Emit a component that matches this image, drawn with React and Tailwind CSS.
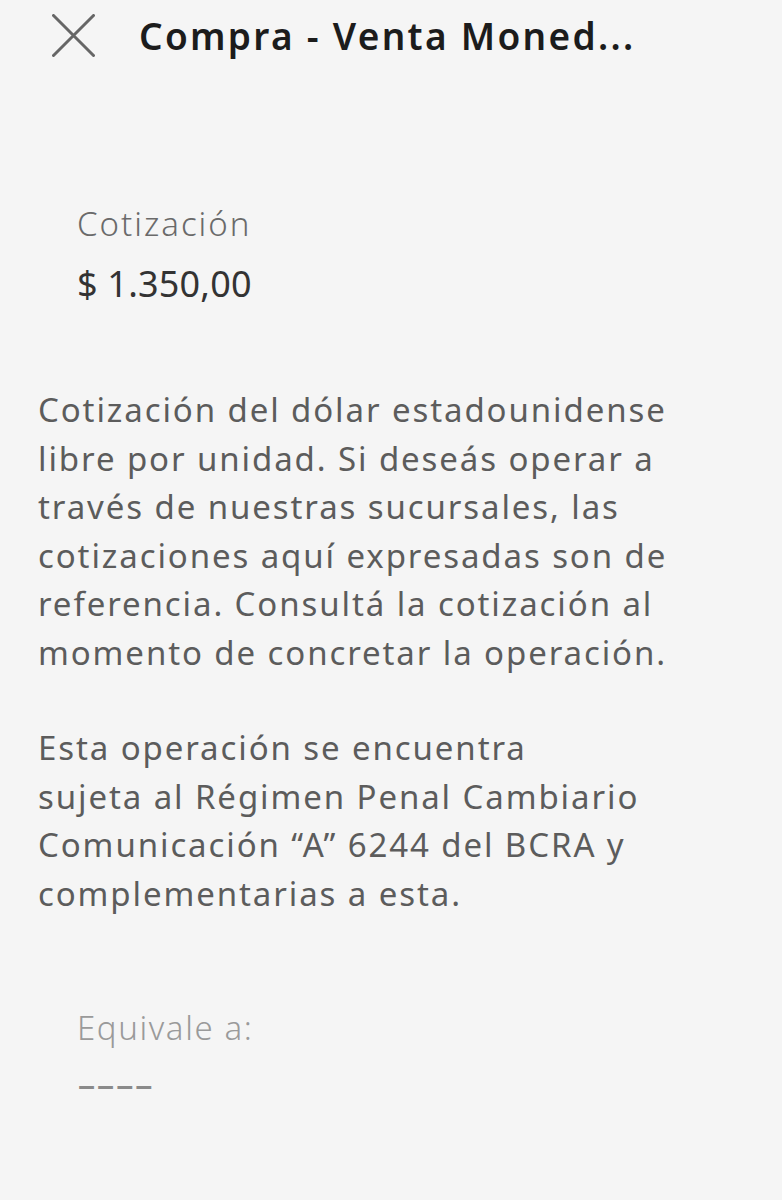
import React from "react";

const CloseIcon = () => (
  <svg width="43" height="43" viewBox="0 0 43 43" fill="none">
    <path
      d="M1.5 1.5L41.5 41.5M41.5 1.5L1.5 41.5"
      stroke="#666666"
      strokeWidth="3"
      strokeLinecap="round"
    />
  </svg>
);

export default function App() {
  return (
    <div
      className="min-h-[1200px] w-full bg-[#f5f5f5] text-[#5f5f5f]"
      style={{ fontFamily: '"Noto Sans", "Open Sans", sans-serif' }}
    >
      {/* Header */}
      <div className="flex items-center pt-[14px] pl-[52px]">
        <button className="shrink-0">
          <CloseIcon />
        </button>
        <h1 className="ml-[44px] text-[37px] leading-[43px] font-semibold tracking-[2.3px] text-[#1c1c1c] whitespace-nowrap">
          Compra - Venta Moned...
        </h1>
      </div>

      {/* Cotizacion */}
      <div className="mt-[143px] pl-[77px]">
        <div className="text-[33px] leading-[48px] font-light tracking-[2px] text-[#6a6a6a]">
          Cotización
        </div>
        <div className="mt-[12px] text-[36px] leading-[48px] tracking-[0.2px] text-[#333333]">
          $ 1.350,00
        </div>
      </div>

      {/* Descripcion */}
      <div className="mt-[78px] px-[38px] text-[33px] leading-[48.5px] tracking-[1.9px] text-[#5c5c5c] whitespace-nowrap">
        <p>
          Cotización del dólar estadounidense
          <br />
          libre por unidad. Si deseás operar a
          <br />
          través de nuestras sucursales, las
          <br />
          cotizaciones aquí expresadas son de
          <br />
          referencia. Consultá la cotización al
          <br />
          momento de concretar la operación.
        </p>
        <p className="mt-[47px]">
          Esta operación se encuentra
          <br />
          sujeta al Régimen Penal Cambiario
          <br />
          Comunicación “A” 6244 del BCRA y
          <br />
          complementarias a esta.
        </p>
      </div>

      {/* Equivale */}
      <div className="mt-[86px] pl-[77px]">
        <div className="text-[33px] leading-[48px] font-light tracking-[1.6px] text-[#9a9a9a]">
          Equivale a:
        </div>
        <div className="mt-[8px] text-[33px] leading-[48px] font-medium text-[#8a8a8a]">
          <span className="inline-block origin-left scale-x-[1.8]">----</span>
        </div>
      </div>
    </div>
  );
}
